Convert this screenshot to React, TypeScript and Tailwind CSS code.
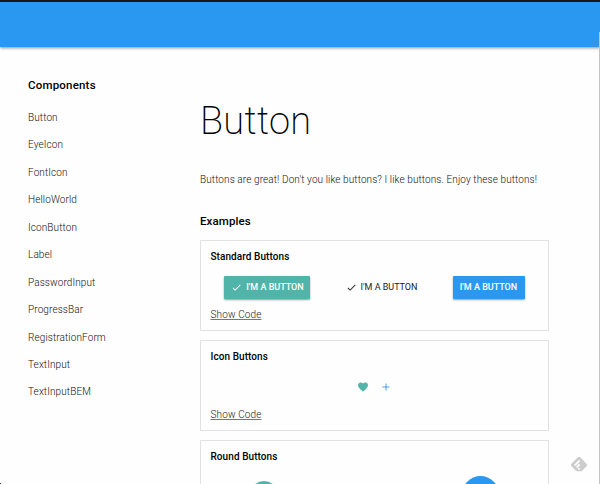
import React from 'react';
import { MdCheck, MdFavorite, MdAdd } from 'react-icons/md';
import { SiFeedly } from 'react-icons/si';

const components = [
  'Button', 'EyeIcon', 'FontIcon', 'HelloWorld', 'IconButton', 'Label',
  'PasswordInput', 'ProgressBar', 'RegistrationForm', 'TextInput', 'TextInputBEM',
];

function Example({ title, code = true, children }: { title: string; code?: boolean; children: React.ReactNode }) {
  return (
    <section className="h-[91px] w-[349px] shrink-0 border border-[#e2e2e2] px-[9.5px] pt-[10px]">
      <h3 className="h-3 text-[10px] leading-3 font-medium tracking-[0.07px] text-black">{title}</h3>
      <div className="mt-[13px] flex h-[23px] items-start justify-center">{children}</div>
      {code && (
        <a className="mt-[9px] block text-[10px] leading-[14px] font-light tracking-[0.13px] text-[#222] underline decoration-[#777] underline-offset-1">
          Show Code
        </a>
      )}
    </section>
  );
}

export default function App() {
  return (
    <div className="relative flex h-[484px] w-[600px] flex-col overflow-hidden bg-[#fefefe] font-['Roboto',sans-serif]">
      <header className="z-10 h-[47px] shrink-0 border-t-2 border-[#15191d] bg-[#2a98f0] shadow-[0_1px_3px_rgba(0,0,0,0.45)]" />
      <div className="flex min-h-0 grow">
        <nav className="w-[200px] shrink-0 pl-7">
          <h2 className="mt-[30px] h-4 text-[11.5px] leading-4 font-medium tracking-[0.2px] text-black">Components</h2>
          <ul className="mt-[10.8px]">
            {components.map((name) => (
              <li key={name} className="flex h-[27.45px] items-center text-[10px] font-light tracking-[0.11px] text-[#111]">
                {name}
              </li>
            ))}
          </ul>
        </nav>
        <main className="flex w-[349px] flex-col">
          <h1 className="mt-[50px] h-12 text-[38px] leading-[48px] font-extralight tracking-[0.3px] text-black">Button</h1>
          <p className="mt-[27px] h-4 text-[10px] leading-4 font-light tracking-[0.1px] whitespace-nowrap text-[#111]">
            Buttons are great! Don't you like buttons? I like buttons. Enjoy these buttons!
          </p>
          <h2 className="mt-[25px] h-4 text-[11.5px] leading-4 font-medium tracking-[0.1px] text-black">Examples</h2>
          <div className="mt-[11px] flex flex-col gap-[9px]">
            <Example title="Standard Buttons">
              <div className="-ml-px flex">
                <button className="flex h-[23px] w-[86px] items-center justify-center gap-1 rounded-[1px] bg-[#50b4a9] pl-[2px] text-[9px] font-medium text-white shadow-[0_1px_2px_rgba(0,0,0,0.4)]">
                  <MdCheck className="size-[11px]" />I'M A BUTTON
                </button>
                <button className="ml-7 flex h-[23px] w-[86px] items-center justify-center gap-1 pl-[2px] text-[9px] text-[#222]">
                  <MdCheck className="size-[11px]" />I'M A BUTTON
                </button>
                <button className="ml-[29px] h-[23px] w-[72px] rounded-[1px] bg-[#2a98f0] text-[9px] font-medium text-white shadow-[0_1px_2px_rgba(0,0,0,0.4)]">
                  I'M A BUTTON
                </button>
              </div>
            </Example>
            <Example title="Icon Buttons">
              <MdFavorite className="mt-[5px] size-3 text-[#50b4a9]" />
              <MdAdd className="mt-[5px] ml-[11px] size-3 text-[#4a9ff5]" />
            </Example>
            <Example title="Round Buttons" code={false}>
              <div className="flex w-[249px] shrink-0 items-start justify-between">
                <div className="mt-[5px] size-7 rounded-full bg-[#50b4a9]" />
                <div className="size-[37px] rounded-full bg-[#2a98f0]" />
              </div>
            </Example>
          </div>
        </main>
      </div>
      <SiFeedly className="absolute top-[456px] left-[571px] size-4 text-[#ccc]" />
      <div className="absolute top-[32px] right-0 bottom-0 z-20 w-px bg-[#c2c4c7]" />
      <div className="absolute bottom-0 left-0 size-px bg-[#333]" />
    </div>
  );
}
